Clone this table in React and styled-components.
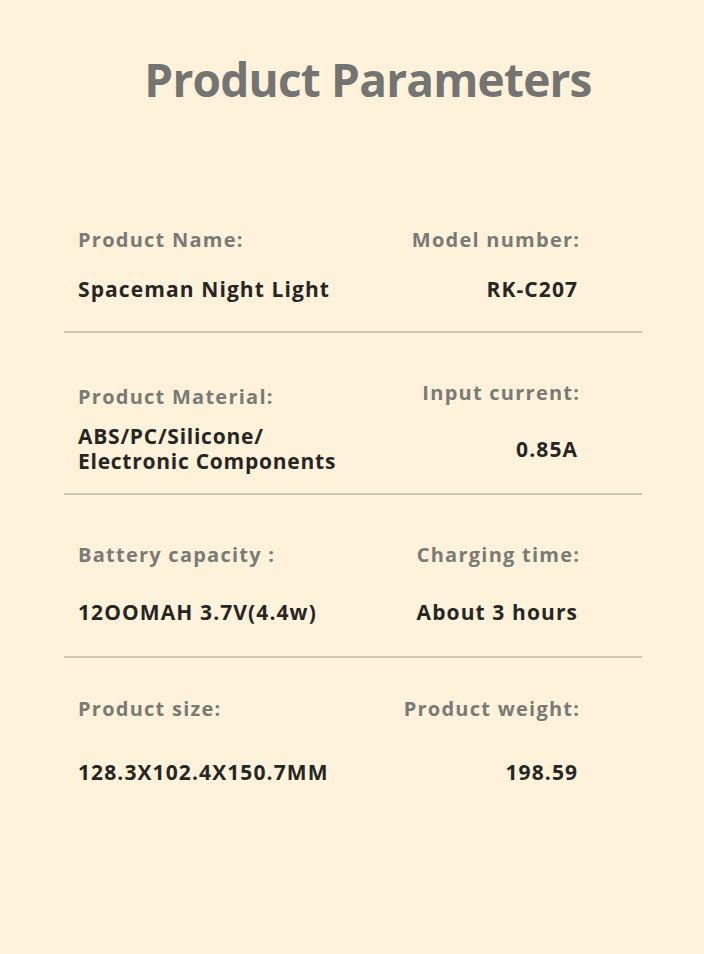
import React from "react";
import styled, { createGlobalStyle } from "styled-components";

const Global = createGlobalStyle`
  html, body { margin: 0; padding: 0; background: #fef3da; }
  body { font-family: "Open Sans", "Noto Sans", sans-serif; }
`;

const Page = styled.div`
  width: 704px;
  min-height: 954px;
  box-sizing: border-box;
  padding: 49px 62px 0 64px;
  background: #fef3da;
`;

const Title = styled.h1`
  margin: 0;
  padding-left: 30px;
  text-align: center;
  font-size: 46px;
  line-height: 60px;
  font-weight: 700;
  color: #747472;
  letter-spacing: -0.8px;
`;

const Table = styled.div`
  margin-top: 116px;
  display: flex;
  flex-direction: column;
`;

const Row = styled.div`
  display: grid;
  grid-template-columns: 1fr auto;
  grid-template-rows: auto auto;
  row-gap: ${(p) => p.$gap}px;
  padding: ${(p) => p.$pt}px 63px ${(p) => p.$pb}px 14px;
  border-bottom: ${(p) => (p.$last ? "none" : "2px solid #cdc6b2")};
`;

const Label = styled.div`
  font-size: 20px;
  line-height: 30px;
  font-weight: 700;
  color: #7a7a77;
  letter-spacing: 1.25px;
  text-align: ${(p) => (p.$right ? "right" : "left")};
  margin-right: ${(p) => (p.$right ? -1.25 : 0)}px;
  transform: translateY(${(p) => p.$lift || 0}px);
`;

const Value = styled.div`
  align-self: center;
  font-size: 21px;
  line-height: ${(p) => (p.$multi ? 25 : 30)}px;
  font-weight: 700;
  color: #272624;
  letter-spacing: ${(p) => (p.$multi ? 0.75 : 1.1)}px;
  text-align: ${(p) => (p.$right ? "right" : "left")};
  margin-right: ${(p) => (p.$right ? 0.9 : 0)}px;
`;

const rows = [
  {
    l: "Product Name:",
    r: "Model number:",
    lv: ["Spaceman Night Light"],
    rv: "RK-C207",
    pt: 0,
    gap: 19,
    pb: 27,
  },
  {
    l: "Product Material:",
    r: "Input current:",
    lv: ["ABS/PC/Silicone/", "Electronic Components"],
    rv: "0.85A",
    pt: 49,
    gap: 12,
    pb: 19,
    lift: -4,
  },
  {
    l: "Battery capacity :",
    r: "Charging time:",
    lv: ["12OOMAH 3.7V(4.4w)"],
    rv: "About 3 hours",
    pt: 45,
    gap: 27,
    pb: 29,
  },
  {
    l: "Product size:",
    r: "Product weight:",
    lv: ["128.3X102.4X150.7MM"],
    rv: "198.59",
    pt: 36,
    gap: 33,
    pb: 0,
    last: true,
  },
];

export default function App() {
  return (
    <>
      <Global />
      <Page>
        <Title>Product Parameters</Title>
        <Table>
          {rows.map((r, i) => (
            <Row key={i} $pt={r.pt} $gap={r.gap} $pb={r.pb} $last={r.last}>
              <Label>{r.l}</Label>
              <Label $right $lift={r.lift}>
                {r.r}
              </Label>
              <Value $multi={r.lv.length > 1}>
                {r.lv.map((t, j) => (
                  <React.Fragment key={j}>
                    {j > 0 && <br />}
                    {t}
                  </React.Fragment>
                ))}
              </Value>
              <Value $right>{r.rv}</Value>
            </Row>
          ))}
        </Table>
      </Page>
    </>
  );
}
